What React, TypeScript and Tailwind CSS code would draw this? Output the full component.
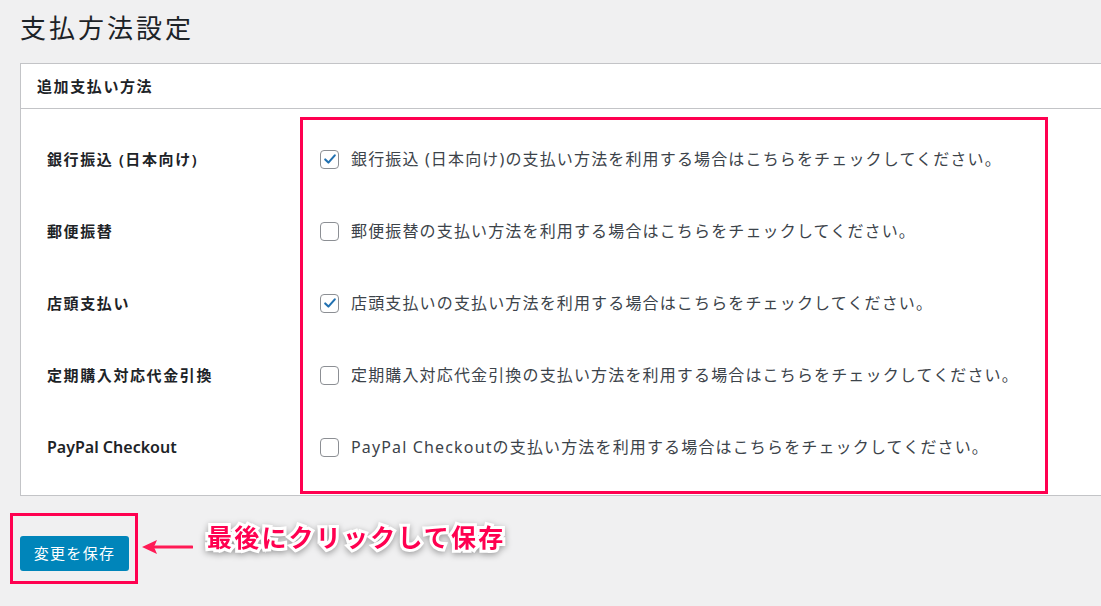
import React from 'react';

const rows = [
  { label: '銀行振込 (日本向け)', text: '銀行振込 (日本向け)の支払い方法を利用する場合はこちらをチェックしてください。', checked: true },
  { label: '郵便振替', text: '郵便振替の支払い方法を利用する場合はこちらをチェックしてください。', checked: false },
  { label: '店頭支払い', text: '店頭支払いの支払い方法を利用する場合はこちらをチェックしてください。', checked: true },
  { label: '定期購入対応代金引換', text: '定期購入対応代金引換の支払い方法を利用する場合はこちらをチェックしてください。', checked: false },
  { label: 'PayPal Checkout', text: 'PayPal Checkoutの支払い方法を利用する場合はこちらをチェックしてください。', checked: false },
];

const Checkbox = ({ checked }: { checked: boolean }) => (
  <span className="flex h-[19px] w-[19px] shrink-0 items-center justify-center rounded-[4px] border border-[#8c8f94] bg-white">
    {checked && (
      <svg viewBox="0 0 20 20" className="h-[16px] w-[16px]">
        <path d="M4 10.5l4 4 8-9" fill="none" stroke="#2271b1" strokeWidth="2.6" strokeLinecap="round" strokeLinejoin="round" />
      </svg>
    )}
  </span>
);

const App = () => {
  return (
    <div className="min-h-[606px] overflow-hidden bg-[#f0f0f1] pl-[20px] pt-[13px] font-['Noto_Sans','Noto_Sans_CJK_JP',sans-serif] text-[#1d2327]">
      <h1 className="mb-[20px] text-[26px] leading-[30px] font-normal tracking-[3px] text-[#1d2327]">支払方法設定</h1>

      <div className="-mr-[20px] border border-[#c3c4c7] bg-white">
        <div className="flex h-[45px] items-center border-b border-[#c3c4c7] pl-[16px] text-[15px] font-bold tracking-[1.6px]">
          追加支払い方法
        </div>
        <div className="flex pt-[8px] pb-[1px]">
          <div className="w-[279px] shrink-0 pt-[6px]">
            {rows.map((r) => (
              <div key={r.label} className="flex h-[72px] items-center pl-[26px] text-[15px] font-semibold tracking-[1.6px] text-[#1d2327]">
                {r.label === 'PayPal Checkout' ? <span className="text-[16px] tracking-normal">{r.label}</span> : r.label}
              </div>
            ))}
          </div>
          <div className="w-[748px] shrink-0 border-[3px] border-[#ff0050] pt-[3px] pb-[8px]">
            {rows.map((r) => (
              <div key={r.label} className="flex h-[72px] items-center gap-[12px] pl-[17px] text-[16px] tracking-[1.15px] text-[#3c434a]">
                <Checkbox checked={r.checked} />
                <span>{r.text}</span>
              </div>
            ))}
          </div>
        </div>
      </div>

      <div className="mt-[17px] flex items-center">
        <div className="-ml-[10px] border-[3px] border-[#ff0050] pt-[20px] pb-[10px] pl-[7px] pr-[6px]">
          <button className="flex h-[35px] w-[109px] items-center justify-center rounded-[3px] bg-[#0085ba] text-[15px] tracking-[1.3px] text-white">
            変更を保存
          </button>
        </div>
        <svg width="52" height="20" viewBox="0 0 52 20" className="ml-[3px] mt-[-4px]">
          <path d="M14 10H51" stroke="#ff1a55" strokeWidth="3" strokeLinecap="round" />
          <path d="M1 10L16 3L13 10L16 17Z" fill="#ff1a55" />
        </svg>
        <span className="mt-[-22px] ml-[14px] text-[25px] font-bold tracking-[2.2px] text-[#ff0050] [paint-order:stroke_fill] [-webkit-text-stroke:6px_white] drop-shadow-[0_2px_3px_rgba(0,0,0,0.35)]">
          最後にクリックして保存
        </span>
      </div>
    </div>
  );
};

export default App;
